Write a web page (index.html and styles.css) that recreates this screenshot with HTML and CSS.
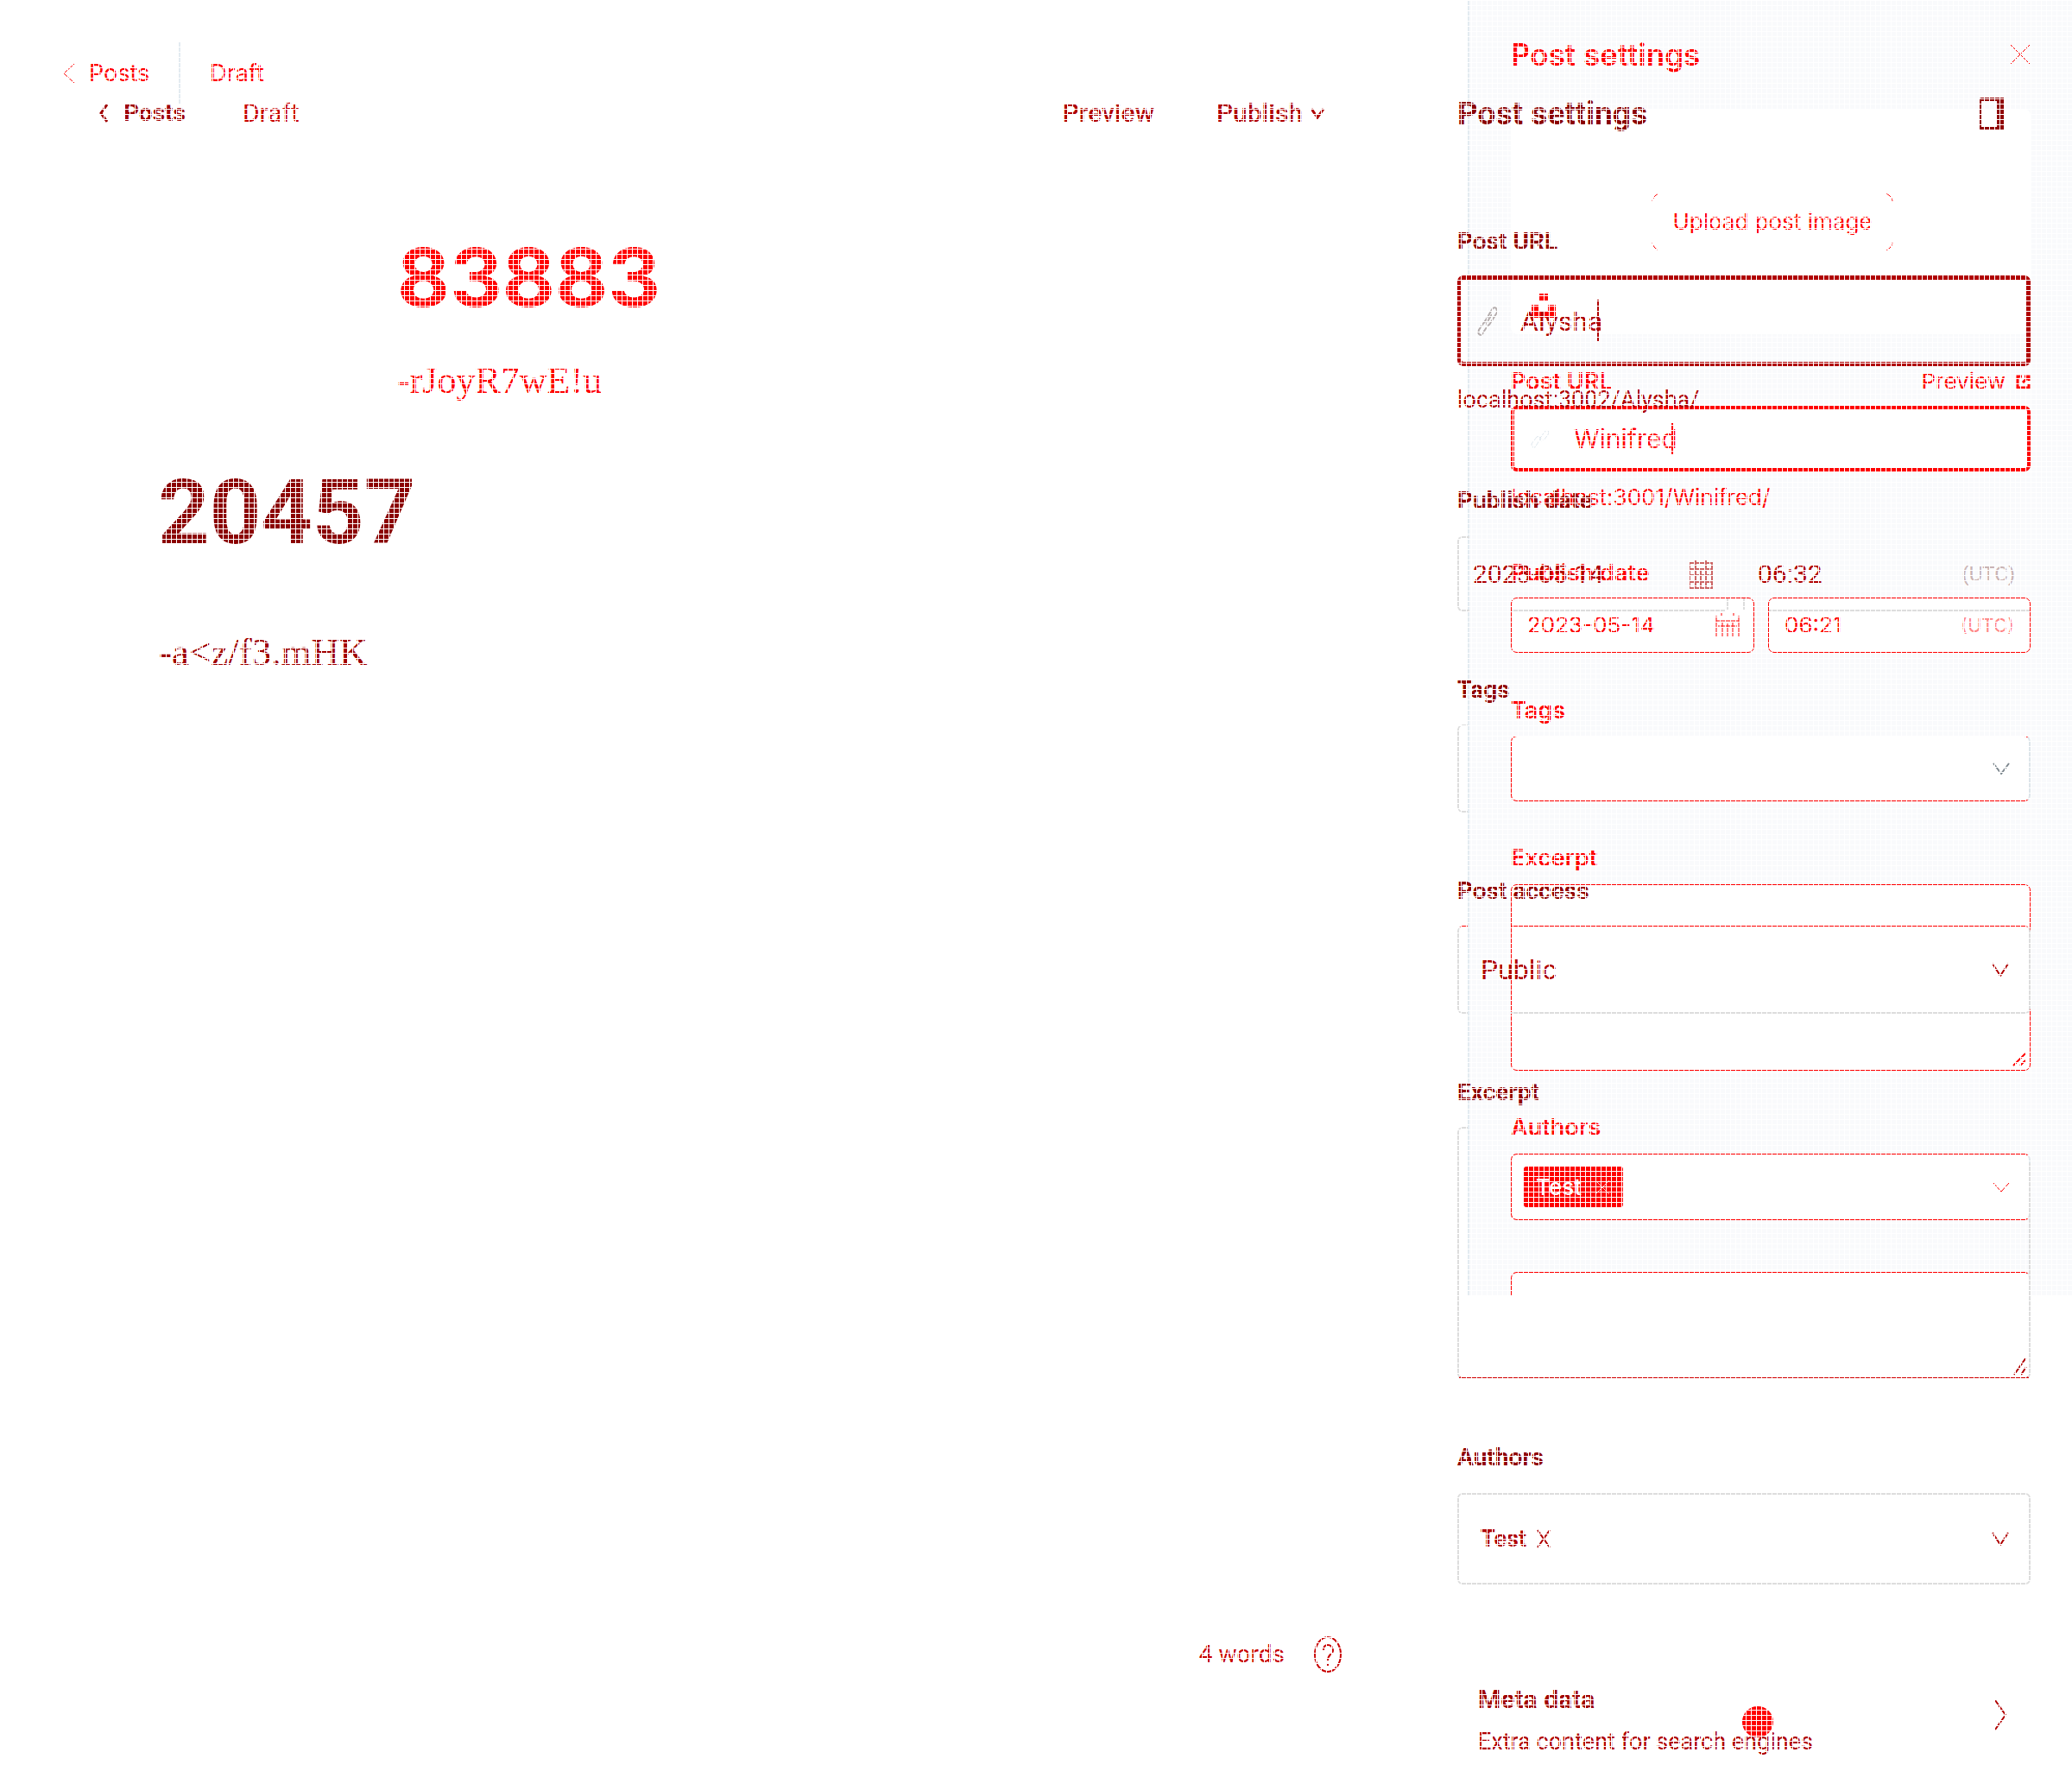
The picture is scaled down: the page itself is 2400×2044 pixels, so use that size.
FILE: index.html
```html
<!DOCTYPE html>
<html lang="en">
<head>
<meta charset="utf-8">
<title>Post editor</title>
<link rel="stylesheet" href="styles.css">
</head>
<body>
<main class="stack">
  <section class="layer layer-a">
    <div class="editor">
      <header class="bar">
        <a class="back" href="#"><svg width="14" height="24" viewBox="0 0 14 24"><path d="M13 1 1 12l12 11"/></svg>Posts</a>
        <span class="state">Draft</span>
      </header>
      <h1>83883</h1>
      <p class="body-text">-rJoyR7wE!u</p>
    </div>
    <aside class="panel">
      <header class="panel-head">
        <h2>Post settings</h2>
        <button class="icon-btn" aria-label="Close"><svg width="24" height="24" viewBox="0 0 24 24"><path d="m1 1 22 22M23 1 1 23"/></svg></button>
      </header>
      <div class="upload">
        <button class="upload-btn">Upload post image</button>
        <svg class="unsplash" width="28" height="28" viewBox="0 0 28 28"><path d="M9 0h10v8H9zM0 13h9v7h10v-7h9v15H0z"/></svg>
      </div>
      <div class="label-row">
        <label for="url-a">Post URL</label>
        <a class="preview" href="#">Preview <svg width="17" height="17" viewBox="0 0 17 17"><path d="M7 2H2v13h13v-4M10 2h5v5M15 2 8 9"/></svg></a>
      </div>
      <div class="field focus">
        <svg class="clip" width="24" height="24" viewBox="0 0 24 24"><path d="m10 14 8-11q4-2 4 3l-6 8q-3 2-4-1M13 11l-7 11q-4 1-4-4l6-8q3-2 4 1"/></svg>
        <input id="url-a" value="Winifred"><i class="caret"></i>
      </div>
      <p class="hint">localhost:3001/Winifred/</p>
      <label class="gap-l" for="date-a">Publish date</label>
      <div class="dates">
        <div class="field date"><input id="date-a" value="2023-05-14"><svg width="28" height="28" viewBox="0 0 28 28"><path d="M1 3v24M27 3v24M1 9h26M3 15h22M8 10v17M14 12v15M20 10v17M7 0v3M21 0v3"/></svg></div>
        <div class="field time"><input aria-label="Time" value="06:21"><span class="utc">(UTC)</span></div>
      </div>
      <label class="gap-m" for="tags-a">Tags</label>
      <div class="field tall fade"><select id="tags-a"><option></option></select><svg class="grey" width="20" height="14" viewBox="0 0 20 14"><path d="m1 1 9 12 9-12"/></svg></div>
      <label class="gap-m" for="excerpt-a">Excerpt</label>
      <div class="area"><textarea id="excerpt-a"></textarea><svg width="16" height="16" viewBox="0 0 16 16"><path d="M1 15 15 1M9 15l6-6"/></svg></div>
      <label class="gap-m" for="author-a">Authors</label>
      <div class="field tall"><button class="chip" id="author-a">Test <svg width="18" height="18" viewBox="0 0 18 18"><path d="m1 1 16 16M17 1 1 17"/></svg></button><svg width="20" height="12" viewBox="0 0 20 12"><path d="m1 1 9 10 9-10"/></svg></div>
      <div class="next"></div>
    </aside>
  </section>

  <section class="layer layer-b">
    <div class="editor">
      <header class="bar">
        <a class="back" href="#"><svg width="10" height="24" viewBox="0 0 10 24"><path d="M9 2 2 12l7 10"/></svg>Posts</a>
        <span class="state">Draft</span>
        <button class="preview-btn">Preview</button>
        <button class="publish">Publish <svg width="16" height="14" viewBox="0 0 16 14"><path d="m1 2 7 10 7-10"/></svg></button>
      </header>
      <h1>20457</h1>
      <p class="body-text">-a&lt;z/f3.mHK</p>
      <footer class="count">4 words <svg width="32" height="44" viewBox="0 0 32 44"><ellipse cx="16" cy="22" rx="15" ry="20"/><path d="M11 17q0-6 5-6t6 6q0 3-3 5-3 3-3 7M16 32v3"/></svg></footer>
    </div>
    <aside class="panel">
      <header class="panel-head">
        <h2>Post settings</h2>
        <button class="icon-btn" aria-label="Toggle sidebar"><svg width="30" height="40" viewBox="0 0 30 40"><path class="solid" fill-rule="evenodd" d="M3 1h26v38H3q-2 0-2-2V3q0-2 2-2zm0 4v30h18V5z"/></svg></button>
      </header>
      <label class="first" for="url-b">Post URL</label>
      <div class="field focus">
        <svg class="clip" width="26" height="36" viewBox="0 0 26 36"><path d="m9 20 10-17q5-3 5 5L15 22q-3 2-3-2l6-10M12 15 3 28q-2 6 3 6l8-12"/></svg>
        <input id="url-b" value="Alysha"><i class="caret"></i>
      </div>
      <p class="hint">localhost:3002/Alysha/</p>
      <label class="gap-l" for="date-b">Publish date</label>
      <div class="dates">
        <div class="field date"><input id="date-b" value="2023-05-14"><svg width="28" height="34" viewBox="0 0 28 34"><path d="M1 4h26v29H1zM1 11h26M1 18h26M1 26h26M8 0v33M14 11v22M20 0v33"/></svg></div>
        <div class="field time"><input aria-label="Time" value="06:32"><span class="utc">(UTC)</span></div>
      </div>
      <label class="gap-m" for="tags-b">Tags</label>
      <div class="field tall edge"><select id="tags-b"><option></option></select></div>
      <label class="gap-m" for="access-b">Post access</label>
      <div class="field tall access"><select id="access-b"><option>Public</option></select><svg width="20" height="16" viewBox="0 0 20 16"><path d="m1 1 9 14 9-14"/></svg></div>
      <label class="gap-m" for="excerpt-b">Excerpt</label>
      <div class="area"><textarea id="excerpt-b"></textarea><svg width="16" height="22" viewBox="0 0 16 22"><path d="M1 21 15 1M9 21l6-9"/></svg></div>
      <label class="gap-m" for="author-b">Authors</label>
      <div class="field tall authors"><button class="chip" id="author-b">Test <svg width="16" height="22" viewBox="0 0 16 22"><path d="m1 1 14 20M15 1 1 21"/></svg></button><svg width="20" height="16" viewBox="0 0 20 16"><path d="m1 1 9 14 9-14"/></svg></div>
      <a class="meta" href="#">
        <span class="meta-text"><strong>Meta data</strong><span>Extra content for search engines</span></span>
        <svg width="14" height="36" viewBox="0 0 14 36"><path d="m1 1 12 17L1 35"/></svg>
      </a>
    </aside>
  </section>
  <i class="dot"></i>
  <i class="mesh"></i>
</main>
</body>
</html>
```
FILE: styles.css
```css
* { box-sizing: border-box; }
body { margin: 0; background: #fff; font-family: Inter, sans-serif; }
h1, h2, p { margin: 0; }
a { color: inherit; text-decoration: none; }
button, input, select, textarea { font: inherit; color: inherit; border: 0; padding: 0; margin: 0; background: none; outline: 0; appearance: none; }
input, select { flex: 1; min-width: 0; width: 100%; }
svg { flex: none; fill: none; stroke: currentColor; stroke-width: 2; }
label { display: block; }

.stack { display: grid; min-height: 100vh; position: relative; overflow: hidden; }
.layer { grid-area: 1 / 1; display: flex; align-items: flex-start; isolation: isolate; }
.editor { flex: 1; display: flex; flex-direction: column; }
.bar, .back, .panel-head, .field, .label-row, .preview, .count, .chip, .publish { display: flex; align-items: center; }
.panel-head, .label-row { justify-content: space-between; }
.body-text { font-family: "Liberation Serif", serif; line-height: 60px; }
.panel { flex: none; }
.icon-btn { display: flex; }
.dates { display: flex; }
.field { position: relative; }
.caret { position: absolute; width: 2px; background: currentColor; }
.area { position: relative; }
.area textarea { display: block; width: 100%; height: 100%; resize: none; }
.area svg { position: absolute; right: 4px; bottom: 4px; }

/* first revision */
.layer-a { color: #f00; font-size: 26px; line-height: 32px; }
.layer-a svg { stroke-width: 1; }
.layer-a .bar { padding: 49px 0 0 73px; height: 120px; font-size: 27px; }
.layer-a .back { gap: 16px; height: 71px; width: 136px; border-right: 2px solid #e3ebf1; }
.layer-a .state { padding-left: 34px; }
.layer-a h1 { margin: 151px 0 0 460px; font-size: 94px; line-height: 100px; }
.layer-a .body-text { margin: 40px 0 0 460px; font-size: 44px; }
.layer-a .panel { width: 700px; padding: 43px 48px 0; border-left: 2px solid #e3ebf1; background: #f9fafc; }
.layer-a h2 { font-size: 35px; line-height: 40px; font-weight: 600; }
.layer-a label { font-size: 27px; font-weight: 600; }
.upload { display: flex; flex-direction: column; align-items: center; margin-top: 43px; padding: 97px 20px 19px 24px; background: #fff; border-radius: 8px; }
.upload-btn { position: relative; width: 280px; height: 68px; }
.upload-btn::before { content: ""; position: absolute; inset: 0; border: 1px solid #f00; border-radius: 12px;
  mask: linear-gradient(#000 0 0) 0 0 / 8px 10px, linear-gradient(#000 0 0) 100% 0 / 8px 10px, linear-gradient(#000 0 0) 0 100% / 8px 10px, linear-gradient(#000 0 0) 100% 100% / 8px 10px; mask-repeat: no-repeat; }
.layer-a .unsplash { align-self: flex-start; margin-top: 49px; fill: #f00; stroke: none; }
.label-row { margin-top: 39px; }
.preview { gap: 12px; }
.layer-a .preview svg { stroke-width: 3; }
.layer-a .field { height: 64px; padding: 0 18px; border: 1px solid #f00; border-radius: 7px; background: #fff; }
.layer-a .focus { height: 76px; margin-top: 12px; border-width: 4px; padding: 0 18px; gap: 27px; font-size: 30px; }
.layer-a .clip { color: #dfe7ed; }
.layer-a .caret { left: 182px; top: 16px; height: 36px; }
.layer-a .hint { margin-top: 14px; }
.layer-a .gap-l { margin-top: 56px; }
.layer-a .dates { gap: 16px; margin-top: 12px; }
.layer-a .date { width: 282px; padding-right: 16px; background: linear-gradient(#ddd 0 0) 0 13px / 248px 2px no-repeat, linear-gradient(#ddd 0 0) 249px 0 / 2px 13px no-repeat, linear-gradient(#ddd 0 0) 268px 0 / 2px 13px no-repeat, #fff; }
.layer-a .time { flex: 1; background: linear-gradient(#ddd 0 0) 0 13px / 100% 2px no-repeat, #fff; }
.layer-a .utc { color: #f88; font-size: 22px; }
.layer-a .gap-m { margin-top: 51px; }
.layer-a .tall { height: 77px; margin-top: 14px; padding: 0 22px 0 14px; border-right: 2px solid #dde5ea; justify-content: space-between; }
.layer-a .fade { height: 76px; margin-top: 13px; }
.layer-a .fade + .gap-m { margin-top: 50px; }
.layer-a .grey { color: #7d878e; stroke-width: 2; }
.layer-a .area { height: 216px; margin-top: 14px; border: 1px solid #f00; border-radius: 7px; background: #fff; }
.layer-a .area svg { stroke-width: 2; }
.layer-a .area + .gap-m { margin-top: 50px; }
.layer-a .chip { width: 115px; height: 47px; padding: 0 14px; gap: 15px; background: #f00; color: #fff; border-radius: 3px; font-weight: 500; }
.layer-a .chip svg { color: #fbb; }
.next { height: 28px; margin-top: 60px; border: 1px solid #f00; border-right: 2px solid #dde5ea; border-bottom: 0; border-radius: 7px 7px 0 0; background: #fff; }

/* second revision */
.layer-b { color: #b00000; font-family: Roboto, sans-serif; font-size: 30px; line-height: 36px; align-items: stretch; }
.layer-b .bar { padding: 108px 154px 0 115px; height: 153px; font-weight: 500; }
.layer-b .back { gap: 18px; color: #a00000; font-weight: 700; font-size: 28px; }
.layer-b .state { margin-left: 66px; flex: 1; color: #c80000; font-weight: 400; }
.publish { gap: 9px; margin-left: 72px; }
.layer-b .bar svg { stroke-width: 3; }
.layer-b h1 { margin: 381px 0 0 183px; font-size: 104px; line-height: 120px; color: #8b0000; }
.layer-b .body-text { margin: 71px 0 0 184px; font-size: 45px; color: #a00000; }
.count { margin: auto 134px 106px auto; gap: 34px; color: #c80000; font-size: 28px; }
.layer-b .panel { width: 712px; padding: 108px 48px 0 0; }
.layer-b .panel-head { padding-right: 30px; }
.layer-b h2 { font-size: 37px; line-height: 48px; color: #8b0000; }
.solid { fill: #900000; stroke: none; }
.layer-b label { color: #900000; font-weight: 700; font-size: 28px; }
.layer-b .first { margin-top: 106px; }
.layer-b .field { height: 87px; padding: 0 18px; }
.layer-b .focus { height: 105px; margin-top: 21px; border: 5px solid #b00000; border-radius: 7px; padding: 0 17px; gap: 25px; font-size: 32px; }
.layer-b .clip { color: #b5adad; stroke-width: 2; }
.layer-b .caret { left: 157px; top: 23px; height: 48px; }
.layer-b .hint { margin-top: 21px; font-size: 27px; }
.layer-b .gap-l { margin-top: 81px; }
.layer-b .dates { gap: 17px; margin-top: 23px; }
.layer-b .date { width: 313px; padding-right: 17px; }
.layer-b .date::before { content: ""; position: absolute; inset: 0 auto 0 0; width: 12px; border: 2px solid #ddd; border-right: 0; border-radius: 6px 0 0 6px; }
.layer-b .date svg { color: #c66; }
.layer-b .time { flex: 1; }
.layer-b .utc { color: #c9b4b4; font-size: 24px; }
.layer-b .gap-m { margin-top: 73px; }
.layer-b .tall { height: 102px; margin-top: 22px; padding: 0 23px 0 25px; border: 2px solid #ddd; border-radius: 6px; justify-content: space-between; }
.layer-b .edge { mask: linear-gradient(90deg, #000 12px, transparent 12px); }
.layer-b .access { border-color: transparent; font-size: 32px; }
.access::before { content: ""; position: absolute; inset: -2px; border: 2px solid #ddd; border-top: 1px solid #f00; border-radius: 6px; mask: linear-gradient(90deg, #000 12px, transparent 12px 62px, #000 62px); pointer-events: none; }
.layer-b .area { height: 292px; margin-top: 22px; }
.layer-b .area::before { content: ""; position: absolute; inset: 0; border: 2px solid #ddd; border-bottom: 2px solid #d00000; border-radius: 6px; pointer-events: none; mask: linear-gradient(#000 0 0) 0 0 / 12px 100% no-repeat, linear-gradient(#000 0 0) 100% 100% / 100% 96px no-repeat, linear-gradient(#000 0 0) 100% 100% / 4px 250px no-repeat; }
.layer-b .authors { height: 106px; margin-top: 23px; }
.layer-b .chip { gap: 12px; font-weight: 700; font-size: 27px; }
.meta { display: flex; align-items: flex-start; justify-content: space-between; margin-top: 113px; padding: 0 28px 0 24px; }
.meta > svg { margin-top: 20px; }
.meta-text { display: flex; flex-direction: column; gap: 11px; }
.meta strong { font-size: 30px; line-height: 40px; color: #a00000; }
.meta-text span { font-size: 27px; }

.dot { position: absolute; right: 346px; top: 1976px; width: 36px; height: 36px; border-radius: 50%; background: #f00; }
.mesh { position: absolute; inset: 0; pointer-events: none; background: linear-gradient(90deg, #fff 1px, transparent 1px) 0 0 / 6px 6px, linear-gradient(#fff 1px, transparent 1px) 0 0 / 6px 6px; }
```
